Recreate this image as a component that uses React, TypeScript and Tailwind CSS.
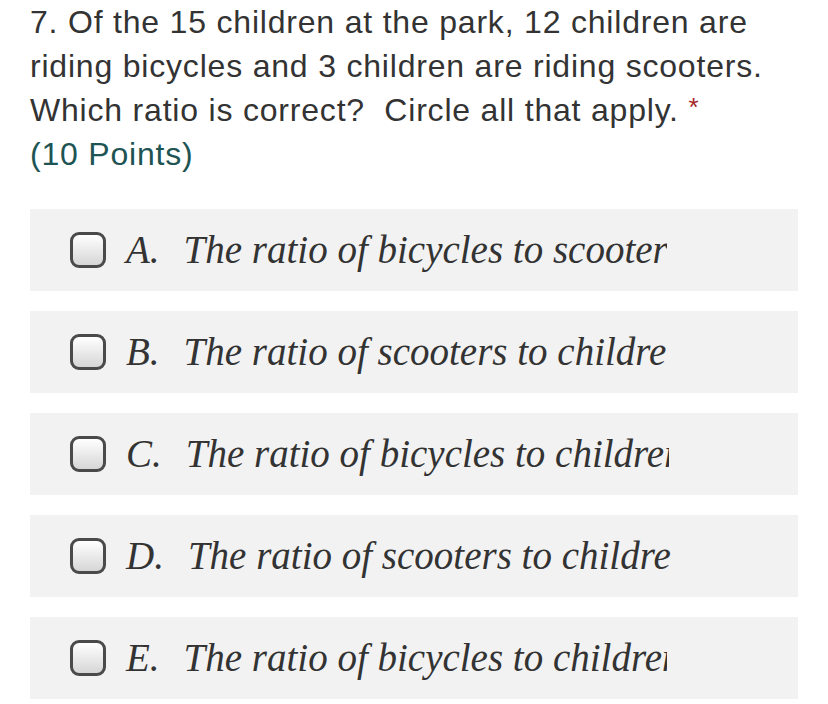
export default function App() {
  const options = [
    { letter: 'A.', text: 'The ratio of bicycles to scooters' },
    { letter: 'B.', text: 'The ratio of scooters to children' },
    { letter: 'C.', text: 'The ratio of bicycles to children' },
    { letter: 'D.', text: 'The ratio of scooters to children' },
    { letter: 'E.', text: 'The ratio of bicycles to children' },
  ];

  return (
    <div className="min-h-screen w-[828px] bg-white px-[30px]">
      {/* Question */}
      <div className="font-['Liberation_Sans',Arial,sans-serif] text-[32px] leading-[44px] tracking-[0.8px] text-[#333333]">
        <div className="h-[44px]">7. Of the 15 children at the park, 12 children are</div>
        <div className="h-[44px]">riding bicycles and 3 children are riding scooters.</div>
        <div className="h-[44px] whitespace-pre">
          Which ratio is correct?  Circle all that apply.{' '}
          <span className="relative -top-[5px] text-[26px] text-[#a4262c]">*</span>
        </div>
        <div className="h-[44px] text-[#1e5453]">(10 Points)</div>
      </div>

      {/* Options */}
      <div className="mt-[33px] flex w-[768px] flex-col gap-[20px]">
        {options.map((o) => (
          <div key={o.letter} className="flex h-[82px] items-center bg-[#f2f2f2] pl-[40px]">
            <div className="h-[36px] w-[36px] shrink-0 rounded-[9px] border-[3px] border-[#4a4a4a] bg-gradient-to-b from-white to-[#d6d6d6]" />
            <div className="ml-[20px] flex items-baseline font-['Liberation_Serif','Times_New_Roman',serif] text-[39px] italic text-[#333333]">
              <span className="mr-[24px]">{o.letter}</span>
              <span className="block w-[483px] overflow-hidden whitespace-nowrap">{o.text}</span>
            </div>
          </div>
        ))}
      </div>
    </div>
  );
}
